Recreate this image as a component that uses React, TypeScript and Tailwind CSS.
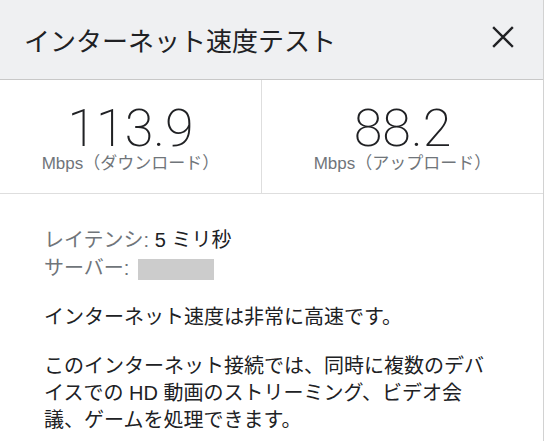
import React from "react";

const font = { fontFamily: '"Liberation Sans", "Noto Sans CJK JP", sans-serif' };

export default function App() {
  return (
    <div
      className="w-[544px] h-[441px] overflow-hidden bg-white border-r border-[#d2d2d2] text-[#202124]"
      style={font}
    >
      <div className="h-[80px] bg-[#eff0f2] border-b border-[#c8c8c8] flex items-center justify-between pl-[24px] pr-[29px]">
        <div className="text-[26px] leading-none text-[#202124] pt-[1px]" style={{ fontFamily: '"Noto Sans CJK JP", sans-serif' }}>
          インターネット速度テスト
        </div>
        <svg width="22" height="22" viewBox="0 0 22 22" className="mb-[5px]">
          <path d="M2 2 L20 20 M20 2 L2 20" stroke="#202124" strokeWidth="2.4" strokeLinecap="square" fill="none" />
        </svg>
      </div>

      <div className="grid grid-cols-[262px_1fr] h-[114px] border-b border-[#dedede]">
        <div className="border-r border-[#dedede] flex flex-col items-center pt-[24px]">
          <div className="text-[52px] leading-[50px] font-extralight" style={{ fontFamily: "Roboto, sans-serif" }}>
            113.9
          </div>
          <div className="text-[17px] leading-[20px] text-[#70757a]">Mbps（ダウンロード）</div>
        </div>
        <div className="flex flex-col items-center pt-[24px]">
          <div className="text-[52px] leading-[50px] font-extralight" style={{ fontFamily: "Roboto, sans-serif" }}>
            88.2
          </div>
          <div className="text-[17px] leading-[20px] text-[#70757a]">Mbps（アップロード）</div>
        </div>
      </div>

      <div className="pl-[44px] pr-[44px] pt-[32px] text-[20px]">
        <div className="leading-[28px]">
          <span className="text-[#70757a]">レイテンシ:</span>
          <span className="text-[#202124]"> 5 ミリ秒</span>
        </div>
        <div className="leading-[28px] flex items-center">
          <span className="text-[#70757a]">サーバー:</span>
          <span className="inline-block w-[76px] h-[21px] bg-[#cccccc] ml-[9px] mt-[2px]" />
        </div>
        <p className="leading-[27px] mt-[22px]">インターネット速度は非常に高速です。</p>
        <p className="leading-[27px] mt-[22px]">
          このインターネット接続では、同時に複数のデバイスでの HD 動画のストリーミング、ビデオ会議、ゲームを処理できます。
        </p>
      </div>
    </div>
  );
}
